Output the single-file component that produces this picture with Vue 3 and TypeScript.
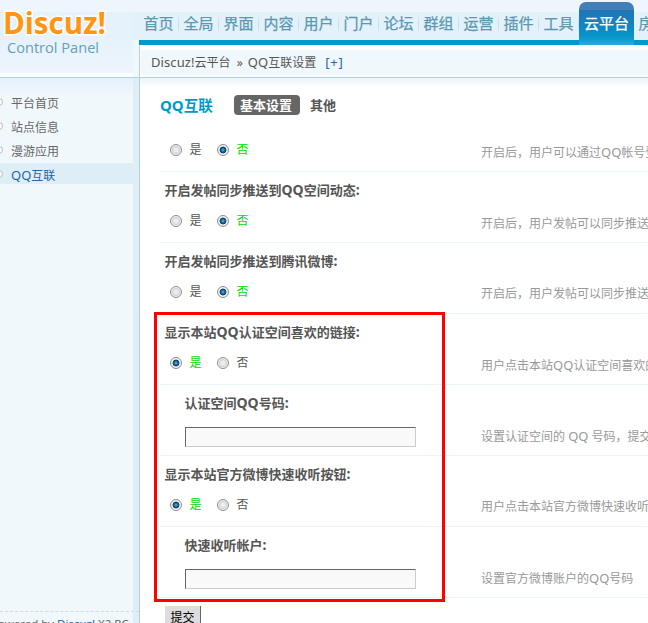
<script setup lang="ts">
import { h, ref } from 'vue'

// Latin runs use a slightly larger face than the Chinese text around them.
const Mixed = (props: { text: string }) =>
  props.text
    .split(/([A-Za-z!:]+)/)
    .filter(Boolean)
    .map((part) => (/^[A-Za-z!:]+$/.test(part) ? h('span', { class: 'latin' }, part) : part))
Mixed.props = ['text']

interface Setting {
  key: string
  title?: string
  kind: 'switch' | 'text'
  tip: string
}

const nav = ['首页', '全局', '界面', '内容', '用户', '门户', '论坛', '群组', '运营', '插件', '工具', '云平台', '房产']
const active = '云平台'
const menu = ['平台首页', '站点信息', '漫游应用', 'QQ互联']
const current = 'QQ互联'

const settings: Setting[] = [
  { key: 'login', kind: 'switch', tip: '开启后，用户可以通过QQ帐号登录本站' },
  { key: 'feed', title: '开启发帖同步推送到QQ空间动态:', kind: 'switch', tip: '开启后，用户发帖可以同步推送到QQ空间' },
  { key: 'weibo', title: '开启发帖同步推送到腾讯微博:', kind: 'switch', tip: '开启后，用户发帖可以同步推送到腾讯微博' },
  { key: 'like', title: '显示本站QQ认证空间喜欢的链接:', kind: 'switch', tip: '用户点击本站QQ认证空间喜欢的链接' },
  { key: 'likeqq', title: '认证空间QQ号码:', kind: 'text', tip: '设置认证空间的 QQ 号码，提交后生效' },
  { key: 'follow', title: '显示本站官方微博快速收听按钮:', kind: 'switch', tip: '用户点击本站官方微博快速收听按钮' },
  { key: 'account', title: '快速收听帐户:', kind: 'text', tip: '设置官方微博账户的QQ号码' },
]

const values = ref<Record<string, string>>({
  login: '0', feed: '0', weibo: '0', like: '1', likeqq: '', follow: '1', account: '',
})
</script>

<template>
  <div class="page">
    <header class="header">
      <div class="brand">
        <svg width="133" height="73" viewBox="0 0 133 73">
          <text class="logo" x="3" y="34" textLength="103" lengthAdjust="spacingAndGlyphs">Discuz!</text>
          <text class="sub" x="7" y="53" textLength="92" lengthAdjust="spacingAndGlyphs">Control Panel</text>
        </svg>
      </div>
      <div class="top">
        <nav class="nav">
          <a v-for="n in nav" :key="n" :class="{ on: n === active }">{{ n }}</a>
        </nav>
        <div class="crumbs">
          <div class="crumb"><Mixed text="Discuz!云平台" /><i>»</i><Mixed text="QQ互联设置" /><b>[+]</b></div>
        </div>
      </div>
    </header>

    <div class="body">
      <aside class="side">
        <ul>
          <li v-for="m in menu" :key="m" :class="{ on: m === current }"><Mixed :text="m" /></li>
        </ul>
        <p class="foot">Powered by <a>Discuz!</a> X2 RC</p>
      </aside>

      <main class="main">
        <div class="heading">
          <h1><Mixed text="QQ互联" /></h1>
          <span class="tab on">基本设置</span>
          <span class="tab">其他</span>
        </div>
        <section v-for="s in settings" :key="s.key" class="row" :class="{ first: !s.title, nested: s.kind === 'text' }">
          <div class="field">
            <h2 v-if="s.title"><Mixed :text="s.title" /></h2>
            <div v-if="s.kind === 'switch'" class="radios">
              <label v-for="o in [['1', '是'], ['0', '否']]" :key="o[0]" :class="{ on: values[s.key] === o[0] }">
                <input v-model="values[s.key]" type="radio" :name="s.key" :value="o[0]" />{{ o[1] }}
              </label>
            </div>
            <input v-else v-model="values[s.key]" class="txt" type="text" />
          </div>
          <p class="tip"><Mixed :text="s.tip" /></p>
        </section>
        <button class="submit" type="button">提交</button>
        <div class="callout"></div>
      </main>
    </div>
  </div>
</template>

<style>
html, body { margin: 0; overflow: hidden; }
.latin { font-size: 1.0833em; }
</style>

<style scoped>
.page {
  width: 648px; height: 623px; overflow: hidden; background: #fff;
  display: flex; flex-direction: column;
  font: 12px/20px "Noto Sans", "Noto Sans CJK SC", sans-serif; color: #555;
}
.page * { box-sizing: border-box; }
.header {
  flex: none; display: flex; height: 78px; border-bottom: 1px solid #b5cfd9;
  background: linear-gradient(#eef5fd 0 12px, #e3f1fb 12px 40px, #eff8fd 40px);
}
.brand {
  width: 133px; height: 73px; flex: none; margin-right: 6px; box-shadow: 0 4px #fff;
  background: linear-gradient(#eef5fd 0 12px, #e5f1fb 12px 30px, #edf5fd 73px);
}
.brand svg { display: block; }
.logo { font: bold 31px "Open Sans", sans-serif; fill: #ff9510; stroke: #fff; stroke-width: 3px; paint-order: stroke; }
.sub { font: 15px "Open Sans", sans-serif; fill: #669fb8; }
.top { width: 509px; flex: none; overflow: hidden; }
.nav { display: flex; height: 45px; border-bottom: 5px solid #0099cc; }
.nav a {
  flex: none; width: 40px; height: 24px; margin-top: 12px; padding-left: 4.5px; white-space: nowrap;
  font-size: 15px; line-height: 23px; -webkit-text-stroke: .25px; color: #5b98b0;
  background: linear-gradient(#e3f1fb, #c3dce6, #e3f1fb) right / 1px 21px no-repeat;
}
.nav a.on {
  width: 55px; height: 43px; margin-top: 2px; padding: 10px 0 0; text-align: center; color: #fff;
  border-radius: 7px 7px 0 0;
  background: linear-gradient(#427fb8 0 8px, #2273b4 8px, #0b8cc5 29px, #0899cb 36px, #2eaad4 43px);
}
.crumbs { height: 32px; border-left: 1px solid #b5cfd9; padding: 5px 0 2px 1px; background: #fff; }
.crumb { height: 25px; padding-left: 10px; background: #f1f8fc; line-height: 25px; white-space: nowrap; }
.crumb i { font-style: normal; margin: 0 5px 0 6px; }
.crumb b { font-weight: 400; font-size: 13px; color: #2366a8; margin-left: 9px; letter-spacing: .8px; }
.crumb :deep(.latin) { letter-spacing: .1px; }

.body { flex: 1; display: flex; min-height: 0; }
.side {
  flex: none; width: 140px; border-right: 1px solid #b5cfd9; display: flex; flex-direction: column;
  background: linear-gradient(90deg, transparent 133px, #deeef7 133px), linear-gradient(#e4f0fb, #f1f8fc 18px);
}
.side ul { list-style: none; margin: 0; padding: 13px 6px 0 0; flex: 1; }
.side li { height: 21px; margin-bottom: 3px; padding-left: 9.5px; line-height: 25px; color: #666; display: flex; white-space: pre; }
.side li::before {
  content: ""; flex: none; width: 6px; height: 6px; margin: 7px 8px 0 -14.5px;
  border: 1px solid #bbb; border-radius: 50%; background: #fff;
}
.side li.on { background: #deeef7; color: #2366a8; }
.foot {
  height: 12px; margin: 0; padding-top: 3px; border-top: 1px dashed #d2d9df; white-space: nowrap;
  font-size: 11.5px; line-height: 17px; text-indent: -9px; color: #666; overflow: hidden;
}
.foot a { color: #2366a8; }

.main {
  position: relative; flex: 1; min-width: 0; overflow: hidden; padding: 17px 0 0 20px;
  background: linear-gradient(#e9f3fc, #fff 9px);
}
.heading { height: 40px; display: flex; align-items: flex-start; }
.heading h1 { margin: 0; width: 74px; font-size: 14.5px; line-height: 21px; font-weight: 700; color: #0099cc; }
.heading h1 :deep(.latin) { font-size: 15px; }
.tab { height: 20px; line-height: 21px; padding: 0 6px; font-size: 13px; font-weight: 700; border-radius: 4px; margin-right: 4px; }
.tab.on { background: #666; color: #fff; width: 66px; white-space: nowrap; }
.row {
  height: 71px; display: flex; width: 520px;
  background: repeating-linear-gradient(90deg, #d9edf9 0 1px, transparent 1px 2px) bottom / 100% 1px no-repeat;
}
.row.first { height: 37px; }
.field { width: 321px; flex: none; padding-left: 5px; }
.nested .field { padding-left: 25px; }
h2 { margin: 0 0 0 -.5px; height: 38px; padding-top: 7px; font-size: 13px; line-height: 21px; font-weight: 700; white-space: nowrap; }
h2 :deep(.latin) { font-size: 14px; }
.radios { display: flex; padding-left: 5px; }
.first .radios { padding-top: 4px; }
.radios label { width: 47px; height: 20px; display: flex; align-items: flex-start; gap: 7.5px; line-height: 22px; }
.radios label.on { color: #00dd00; }
.radios input {
  appearance: none; flex: none; width: 12px; height: 12px; margin: 5px 0 0; border: 1px solid #8e8f8f; border-radius: 50%;
  background: radial-gradient(circle at 5px 5px, #eceded 0 2px, #d0d3d6 3.6px, #f3f3f3 4.6px);
}
.radios input:checked { background: radial-gradient(circle at 5px 5px, #56c3e8 0, #18699a 1.8px, #153b5c 3px, #edf1f3 3.8px); }
.txt {
  display: block; width: 231px; height: 20px; margin: 4px 0 0; padding: 0; background: #f9f9f9;
  border: 1px solid; border-color: #666 #ccc #ccc #666; outline: 0;
}
.tip { margin: 0; padding-top: 42px; line-height: 18px; color: #999; white-space: nowrap; }
.first .tip { padding-top: 8px; }
.submit {
  display: block; margin: 8px 0 0 5px; width: 36px; height: 21px; padding: 0; border: 0; border-right: 1px solid #666;
  border-bottom: 1px solid #666; background: #ddd; color: #000; font: 12px/21px "Noto Sans CJK SC", sans-serif;
}
.callout { position: absolute; left: 14px; top: 234px; width: 291px; height: 290px; border: 3px solid #f00; }
</style>
